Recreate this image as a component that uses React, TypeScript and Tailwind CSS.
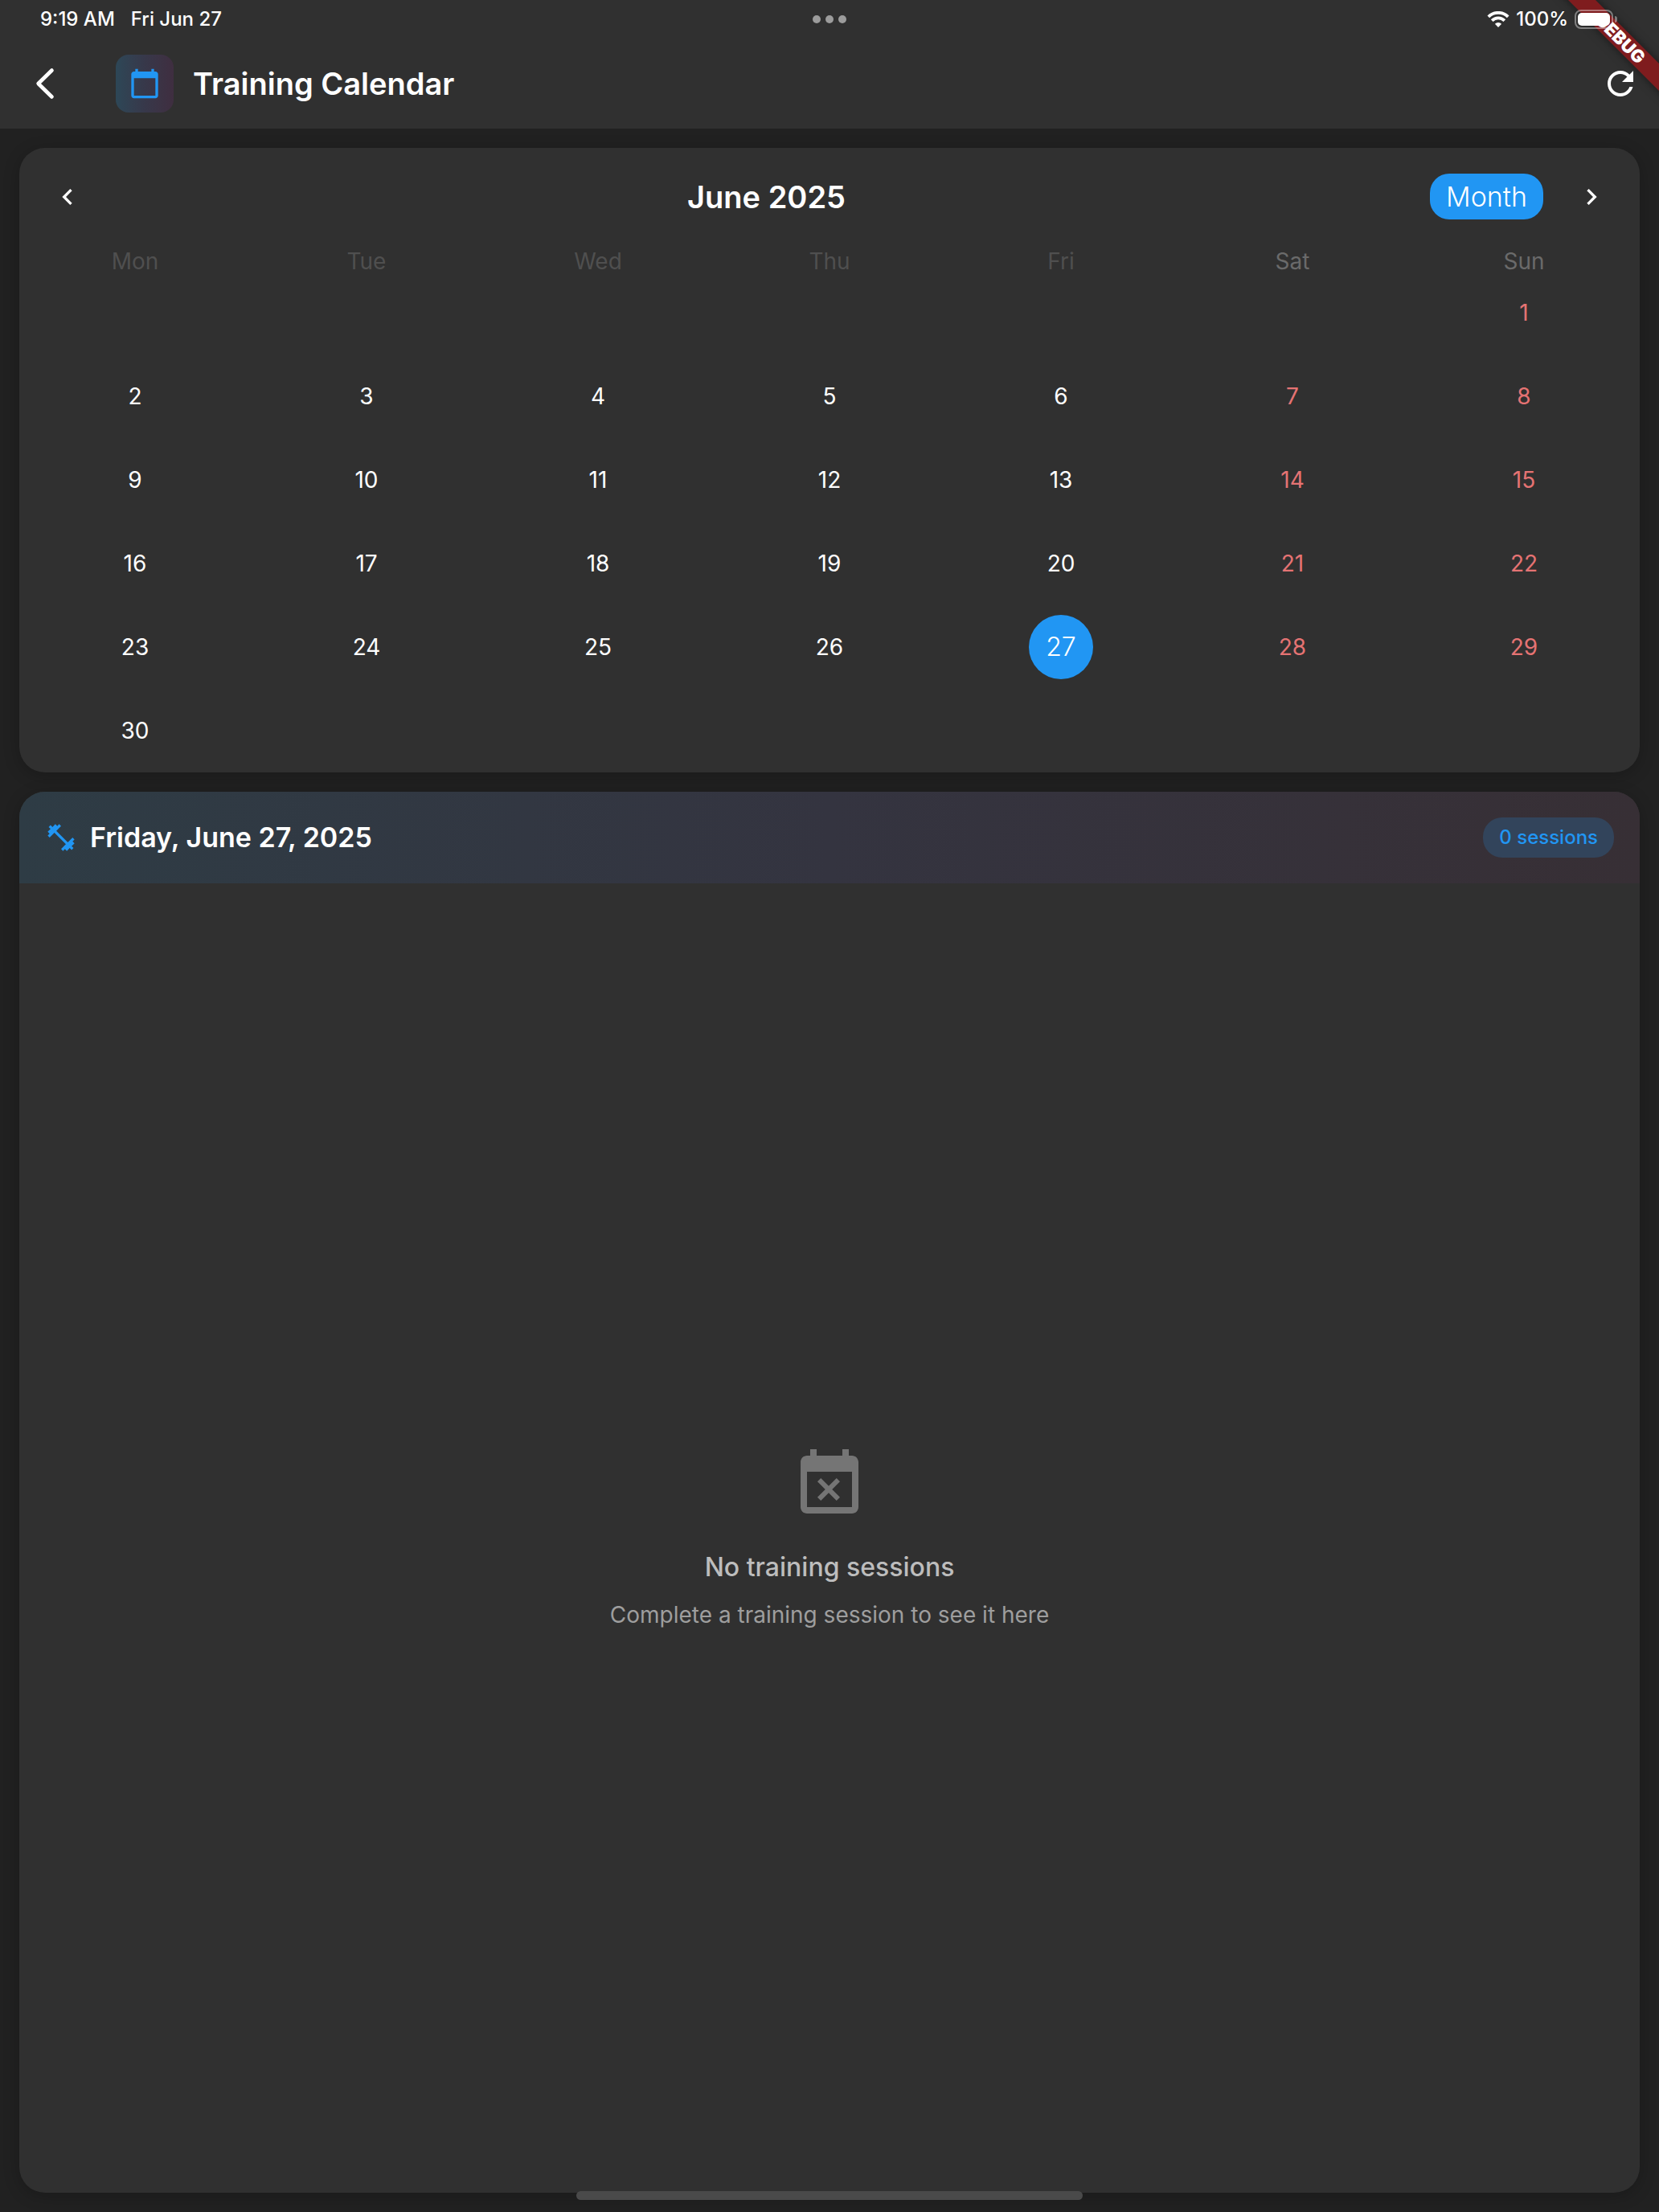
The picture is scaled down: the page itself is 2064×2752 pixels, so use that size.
import React from "react";

const WEEKDAYS = ["Mon", "Tue", "Wed", "Thu", "Fri", "Sat", "Sun"];

const WEEKS: (number | null)[][] = [
  [null, null, null, null, null, null, 1],
  [2, 3, 4, 5, 6, 7, 8],
  [9, 10, 11, 12, 13, 14, 15],
  [16, 17, 18, 19, 20, 21, 22],
  [23, 24, 25, 26, 27, 28, 29],
  [30, null, null, null, null, null, null],
];

const SELECTED_DAY = 27;

const ICONS = {
  calendar:
    "M20 3h-1V1h-2v2H7V1H5v2H4c-1.1 0-2 .9-2 2v16c0 1.1.9 2 2 2h16c1.1 0 2-.9 2-2V5c0-1.1-.9-2-2-2zm0 18H4V8h16v13z",
  refresh:
    "M17.65 6.35C16.2 4.9 14.21 4 12 4c-4.42 0-7.99 3.58-7.99 8s3.57 8 7.99 8c3.73 0 6.84-2.55 7.73-6h-2.08c-.82 2.33-3.04 4-5.65 4-3.31 0-6-2.69-6-6s2.69-6 6-6c1.66 0 3.14.69 4.22 1.78L13 11h7V4l-2.35 2.35z",
  chevronLeft: "M15.41 7.41L14 6l-6 6 6 6 1.41-1.41L10.83 12z",
  chevronRight: "M10 6L8.59 7.41 13.17 12l-4.58 4.59L10 18l6-6z",
  dumbbell:
    "M20.57 14.86L22 13.43 20.57 12 17 15.57 8.43 7 12 3.43 10.57 2 9.14 3.43 7.71 2 5.57 4.14 4.14 2.71 2.71 4.14l1.43 1.43L2 7.71l1.43 1.43L2 10.57 3.43 12 7 8.43 15.57 17 12 20.57 13.43 22l1.43-1.43L16.29 22l2.14-2.14 1.43 1.43 1.43-1.43-1.43-1.43L22 16.29z",
  eventBusy:
    "M9.31 17l2.44-2.44L14.19 17l1.06-1.06-2.44-2.44 2.44-2.44L14.19 10l-2.44 2.44L9.31 10l-1.06 1.06 2.44 2.44-2.44 2.44L9.31 17zM19 3h-1V1h-2v2H8V1H6v2H5c-1.11 0-1.99.9-1.99 2L3 19c0 1.1.89 2 2 2h14c1.1 0 2-.9 2-2V5c0-1.1-.9-2-2-2zm0 16H5V8h14v11z",
};

function Icon({ name, className }: { name: keyof typeof ICONS; className: string }) {
  return (
    <svg viewBox="0 0 24 24" fill="currentColor" aria-hidden="true" className={className}>
      <path d={ICONS[name]} />
    </svg>
  );
}

function StatusBar() {
  return (
    <div className="relative z-20 grid h-12 grid-cols-3 items-center px-[50px] text-2xl font-medium">
      <div className="flex gap-5">
        <span>9:19 AM</span>
        <span>Fri Jun 27</span>
      </div>
      <div className="flex justify-center gap-1.5">
        <span className="size-2.5 rounded-full bg-[#9c9c9c]" />
        <span className="size-2.5 rounded-full bg-[#9c9c9c]" />
        <span className="size-2.5 rounded-full bg-[#9c9c9c]" />
      </div>
      <div className="mr-0.5 flex items-center justify-end gap-2">
        <svg viewBox="0 0 28 20" className="h-5 w-7" fill="none" stroke="currentColor" aria-hidden="true">
          <path d="M1.8 6.8a17.4 17.4 0 0 1 24.4 0" strokeWidth="3.8" />
          <path d="M6.2 11.6a11 11 0 0 1 15.6 0" strokeWidth="3.8" />
          <path d="M14 20l-4.1-4.2a5.8 5.8 0 0 1 8.2 0z" fill="currentColor" stroke="none" />
        </svg>
        <span>100%</span>
        <div className="flex items-center gap-0.5">
          <div className="h-6 w-12 rounded-lg border-2 border-white/40 p-0.5">
            <div className="h-full rounded-[5px] bg-white" />
          </div>
          <span className="h-2 w-[3px] rounded-r-full bg-white/40" />
        </div>
      </div>
    </div>
  );
}

function DebugBanner() {
  return (
    <div className="pointer-events-none absolute top-0 right-0 z-10 size-36 overflow-hidden">
      <div className="absolute top-9 -right-12 flex h-6 w-48 rotate-45 items-center justify-center bg-[#7f1c1e] text-[22px] leading-6 font-black shadow-[0_0_12px_rgba(0,0,0,0.5)]">
        DEBUG
      </div>
    </div>
  );
}

function AppBar() {
  return (
    <div className="flex h-28 items-center pr-6 pl-8">
      <button type="button" aria-label="Back" className="flex size-12 items-center justify-center">
        <svg viewBox="0 0 24 40" className="h-10 w-6" fill="none" stroke="currentColor" strokeWidth="4.6" strokeLinecap="round" strokeLinejoin="round" aria-hidden="true">
          <path d="M20.5 3.5L3.6 20l16.9 16.5" />
        </svg>
      </button>
      <div className="ml-16 flex size-[72px] items-center justify-center rounded-2xl bg-linear-to-r from-[#2d4757] via-[#37384a] to-[#3f2e40]">
        <Icon name="calendar" className="size-10 text-[#2196f3]" />
      </div>
      <h1 className="ml-6 text-[38px] leading-12 font-semibold">Training Calendar</h1>
      <button type="button" aria-label="Refresh" className="ml-auto size-12">
        <Icon name="refresh" className="size-12" />
      </button>
    </div>
  );
}

function DayCell({ day, column }: { day: number | null; column: number }) {
  if (day === null) return <td className="h-26 p-0" />;
  const look =
    day === SELECTED_DAY
      ? "bg-[#2196f3] text-[32px] font-light text-white"
      : column > 4
        ? "text-[28px] text-[#e57373]"
        : "text-[28px] text-white";
  return (
    <td className="h-26 p-0 text-center align-middle">
      <button type="button" className={`mx-auto flex size-20 items-center justify-center rounded-full ${look}`}>
        {day}
      </button>
    </td>
  );
}

function CalendarCard() {
  return (
    <section className="mx-6 mt-6 rounded-[32px] bg-[#303030] shadow-[0_4px_20px_rgba(0,0,0,0.22)]">
      <div className="flex items-center px-10 py-8">
        <button type="button" aria-label="Previous month" className="mr-6 size-10">
          <Icon name="chevronLeft" className="size-10" />
        </button>
        <h2 className="flex-1 text-center text-[38px] leading-10 font-semibold">June 2025</h2>
        <button type="button" className="rounded-3xl bg-[#2196f3] px-5 py-2 text-[34px] leading-[41px] font-light">
          Month
        </button>
        <button type="button" aria-label="Next month" className="ml-10 size-10">
          <Icon name="chevronRight" className="size-10" />
        </button>
      </div>
      <table className="w-full table-fixed border-collapse">
        <thead>
          <tr>
            {WEEKDAYS.map((name, i) => (
              <th
                key={name}
                scope="col"
                className={`h-8 p-0 pt-2.5 align-top text-[28px] leading-5 font-normal ${i > 4 ? "text-[#6a6a6a]" : "text-[#4f4f4f]"}`}
              >
                {name}
              </th>
            ))}
          </tr>
        </thead>
        <tbody>
          {WEEKS.map((week, w) => (
            <tr key={w}>
              {week.map((day, i) => (
                <DayCell key={i} day={day} column={i} />
              ))}
            </tr>
          ))}
        </tbody>
      </table>
    </section>
  );
}

function SessionsCard() {
  return (
    <section className="mx-6 my-6 flex flex-1 flex-col overflow-hidden rounded-[32px] bg-[#303030] shadow-[0_4px_20px_rgba(0,0,0,0.22)]">
      <div className="flex items-center bg-linear-to-r from-[#2e3c45] via-[#343440] to-[#372f35] p-8">
        <Icon name="dumbbell" className="size-10 text-[#2196f3]" />
        <h2 className="ml-4 text-[34px] leading-10 font-semibold">Friday, June 27, 2025</h2>
        <span className="ml-auto rounded-3xl bg-[#32445b] px-5 py-2 text-2xl leading-[34px] font-medium text-[#2196f3]">
          0 sessions
        </span>
      </div>
      <div className="flex flex-1 flex-col items-center justify-center text-center">
        <Icon name="eventBusy" className="size-24 text-[#757575]" />
        <p className="mt-8 text-[32px] leading-[46px] font-medium text-[#bdbdbd]">No training sessions</p>
        <p className="mt-4 text-[28px] leading-10 text-[#9e9e9e]">Complete a training session to see it here</p>
      </div>
    </section>
  );
}

export default function App() {
  return (
    <div className="relative flex min-h-screen flex-col overflow-hidden bg-[#212121] font-['Inter',sans-serif] text-white">
      <header className="bg-[#303030]">
        <StatusBar />
        <AppBar />
      </header>
      <DebugBanner />
      <main className="flex flex-1 flex-col">
        <CalendarCard />
        <SessionsCard />
      </main>
      <div className="absolute inset-x-0 bottom-[15px] flex justify-center">
        <div className="h-[11px] w-[630px] rounded-full bg-[#4a4a4a]" />
      </div>
    </div>
  );
}
